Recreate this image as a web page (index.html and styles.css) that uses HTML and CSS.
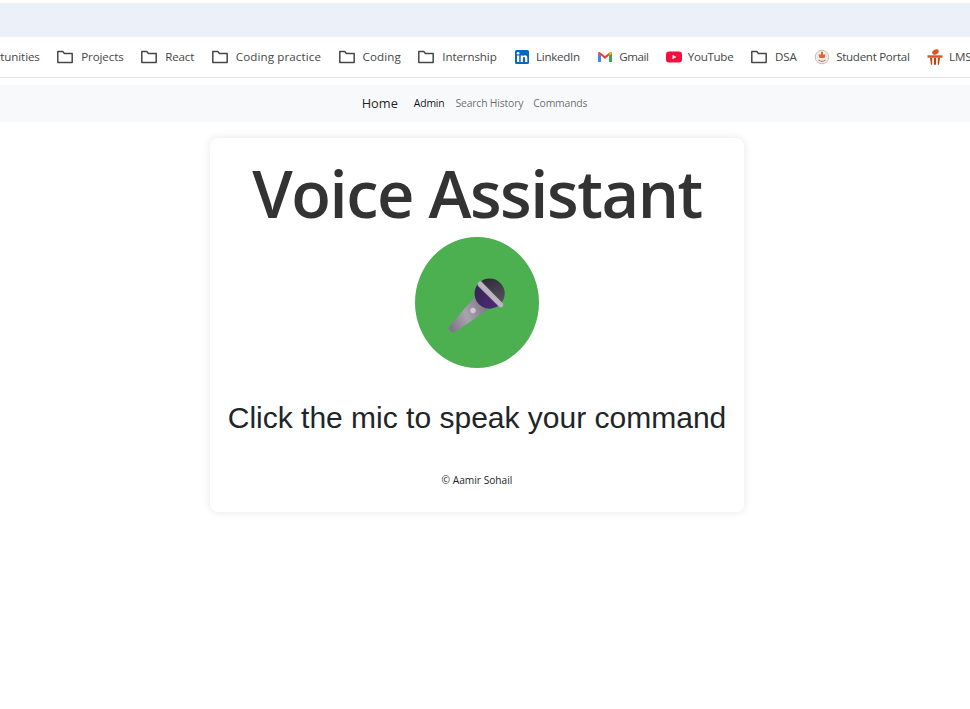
FILE: index.html
```html
<!DOCTYPE html>
<html lang="en">
<head>
<meta charset="utf-8">
<title>Voice Assistant</title>
<link rel="stylesheet" href="styles.css">
</head>
<body>
<div class="tabstrip"></div>
<div class="bookmarks">
  <div class="track">
    <span class="bm">Opportunities</span>
    <span class="bm bm-folder"><svg class="ic" viewBox="0 0 16 16"><path class="folder" d="M.8 2.600h5l1.600 1.800h7.800v9H.8z"/></svg>Projects</span>
    <span class="bm bm-folder"><svg class="ic" viewBox="0 0 16 16"><path class="folder" d="M.8 2.600h5l1.600 1.800h7.800v9H.8z"/></svg>React</span>
    <span class="bm bm-folder bm-loose"><svg class="ic" viewBox="0 0 16 16"><path class="folder" d="M.8 2.600h5l1.600 1.800h7.800v9H.8z"/></svg>Coding practice</span>
    <span class="bm bm-folder bm-loose"><svg class="ic" viewBox="0 0 16 16"><path class="folder" d="M.8 2.600h5l1.600 1.800h7.800v9H.8z"/></svg>Coding</span>
    <span class="bm bm-folder"><svg class="ic" viewBox="0 0 16 16"><path class="folder" d="M.8 2.600h5l1.600 1.800h7.800v9H.8z"/></svg>Internship</span>
    <span class="bm bm-tight"><svg class="ic" viewBox="0 0 16 16"><rect x="1" y="1" width="14" height="14" rx="1.500" fill="#0a66c2"/><rect x="3" y="6.500" width="2.200" height="6.500" fill="#fff"/><circle cx="4.100" cy="4.300" r="1.300" fill="#fff"/><path d="M6.700 6.500h2.100v1c.5-.8 1.300-1.200 2.200-1.200 1.600 0 2.300 1 2.300 2.800V13h-2.200V9.500c0-.9-.3-1.400-1-1.400-.8 0-1.200.6-1.200 1.500V13H6.700z" fill="#fff"/></svg>LinkedIn</span>
    <span class="bm bm-tighter"><svg class="ic" viewBox="0 0 16 16"><path d="M1 4.200v8.800h3V6.500z" fill="#4285f4"/><path d="M12 6.500V13h3V4.200z" fill="#34a853"/><path d="M1 4.200c0-1 1.200-1.500 2-.9L8 7l5-3.700c.8-.6 2-.1 2 .9L12 6.500 8 10 4 6.500z" fill="#ea4335"/><path d="M12 4.900l1-1.600c.8-.6 2-.1 2 .9L12 6.500z" fill="#fbbc04"/></svg>Gmail</span>
    <span class="bm bm-tight"><svg class="ic" viewBox="0 0 16 16"><rect x="0" y="2.500" width="16" height="11" rx="3" fill="#f50f3c"/><path d="M6.500 5.800v4.400L10.300 8z" fill="#fff"/></svg>YouTube</span>
    <span class="bm bm-folder"><svg class="ic" viewBox="0 0 16 16"><path class="folder" d="M.8 2.600h5l1.600 1.800h7.800v9H.8z"/></svg>DSA</span>
    <span class="bm bm-tight"><svg class="ic" viewBox="0 0 16 16"><circle cx="8" cy="8" r="6.800" fill="#f3ebe6"/><circle cx="8" cy="8" r="6.800" fill="none" stroke="#c9b6ac" stroke-width=".9"/><path d="M4.500 5.500h7L10.500 9h-5z" fill="#d9683a"/><rect x="7" y="2.800" width="2" height="3" fill="#d9683a"/><path d="M4.500 11c2.300 1.800 4.700 1.800 7 0" stroke="#a9766a" fill="none"/></svg>Student Portal</span>
    <span class="bm"><svg class="ic" viewBox="0 0 16 16"><ellipse cx="8.500" cy="3" rx="3.400" ry="2.400" fill="#d9541e" transform="rotate(-25 8.500 3)"/><rect x="0.500" y="6.300" width="15" height="2.400" fill="#d9541e"/><path d="M3 8.700h2.200v7H4zM6.900 8.700h2.200v7H6.900zM10.800 8.700H13l-1 7h-1.200z" fill="#b9430f"/></svg>LMS</span>
  </div>
</div>
<nav class="navbar">
  <a class="nav-home">Home</a>
  <a class="nav-link nav-active">Admin</a>
  <a class="nav-link">Search History</a>
  <a class="nav-link">Commands</a>
</nav>
<main class="card">
  <h1 class="title">Voice Assistant</h1>
  <button class="mic" type="button" aria-label="Microphone">
    <svg class="mic-svg" viewBox="0 0 64 64">
      <defs>
        <linearGradient id="handle" x1="1" y1="0.300" x2="0" y2="0.700">
          <stop offset="0" stop-color="#7d7584"/><stop offset=".55" stop-color="#a9a3ae"/><stop offset="1" stop-color="#7f7786"/>
        </linearGradient>
        <linearGradient id="head" x1="0.300" y1="0" x2="0.800" y2="1">
          <stop offset="0" stop-color="#2e2a36"/><stop offset="1" stop-color="#5b5663"/>
        </linearGradient>
        <linearGradient id="purple" x1="0" y1="0" x2="1" y2="1">
          <stop offset="0" stop-color="#34254f"/><stop offset="1" stop-color="#50297c"/>
        </linearGradient>
        <linearGradient id="band" x1="1" y1="0" x2="0" y2="1">
          <stop offset="0" stop-color="#706878"/><stop offset=".5" stop-color="#bdb8c2"/><stop offset="1" stop-color="#7f7787"/>
        </linearGradient>
      </defs>
      <path d="M29 26.500 L42.700 38.500 L10.500 61 Q7.500 62.500 5 60 Q2.800 57.500 4.300 55.500Z" fill="url(#handle)"/>
      <circle cx="44.700" cy="22.500" r="15" fill="url(#head)"/>
      <path d="M33 13 L54.500 34 A15 15 0 0 1 29.800 20.500 Q30.500 16 33 13Z" fill="url(#purple)"/>
      <path d="M36.200 10.200 L58 32.500 Q59 34.500 57.500 35.800 Q55.800 37 54 35.800 L33 15 Q32 13.500 33 11.800 Q34.500 9.500 36.200 10.200Z" fill="url(#band)"/>
      <circle cx="28" cy="39.500" r="2.700" fill="#cfcad3"/>
    </svg>
  </button>
  <p class="prompt">Click the mic to speak your command</p>
  <p class="credit">© Aamir Sohail</p>
</main>
</body>
</html>
```

FILE: styles.css
```css
* { box-sizing: border-box; }
html, body { margin: 0; padding: 0; background: #fff; }
body {
  height: 709px;
  overflow: hidden;
  padding-top: 3px;
  font-family: "Open Sans", "Noto Sans", sans-serif;
  color: #212529;
}
.tabstrip { height: 34px; background: #ebf0f9; }
.bookmarks {
  height: 41px;
  overflow: hidden;
  border-bottom: 1px solid #e2e2e2;
}
.track {
  display: flex;
  align-items: center;
  height: 40px;
  margin-left: -34px;
  width: 1100px;
  gap: 17.500px;
}
.bm {
  display: inline-flex;
  align-items: center;
  gap: 6px;
  font-size: 11.600px;
  line-height: 16px;
  color: #444746;
  white-space: nowrap;
  letter-spacing: -0.120px;
}
.bm-folder { gap: 8px; }
.bm-loose { letter-spacing: 0.100px; }
.bm-tight { letter-spacing: -0.300px; }
.bm-tighter { letter-spacing: -0.500px; }
.ic { width: 16px; height: 16px; flex: none; }
.folder { fill: none; stroke: #474747; stroke-width: 1.500; stroke-linejoin: round; }
.navbar {
  margin-top: 7px;
  height: 37px;
  background: #f8f9fa;
  display: flex;
  align-items: center;
  justify-content: center;
  padding-right: 21px;
  padding-bottom: 2px;
}
.nav-home { font-size: 12.800px; color: rgba(0,0,0,.9); margin-right: 16px; }
.nav-link { font-size: 10.400px; color: rgba(0,0,0,.6); margin-right: 10px; letter-spacing: -0.180px; }
.nav-active { color: rgba(0,0,0,.95); margin-right: 11px; }
.nav-link:last-child { margin-right: 0; }
.card {
  width: 534px;
  height: 374px;
  margin: 16px 0 0 210px;
  background: #fff;
  border-radius: 8px;
  box-shadow: 0 0 8px rgba(0,0,0,.1);
  display: flex;
  flex-direction: column;
  align-items: center;
  padding-top: 12px;
}
.title {
  margin: 0;
  font-size: 65px;
  line-height: 87px;
  font-weight: 600;
  color: #333;
  letter-spacing: -1.450px;
}
.mic {
  flex: none;
  width: 124px;
  height: 131px;
  border: 0;
  padding: 0;
  border-radius: 50%;
  background: #4caf50;
  display: flex;
  align-items: center;
  justify-content: center;
}
.mic-svg { width: 64px; height: 64px; }
.prompt {
  margin: 32px 0 0;
  font-family: "Liberation Sans", Arial, sans-serif;
  font-size: 30px;
  line-height: 36px;
  color: #212529;
}
.credit {
  margin: 36px 0 0;
  font-size: 10.200px;
  line-height: 16px;
  color: #212529;
}
```
